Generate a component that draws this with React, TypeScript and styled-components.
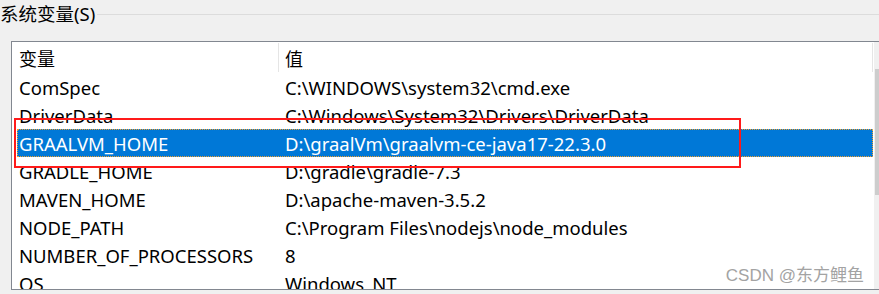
import styled, { createGlobalStyle } from 'styled-components';

const GlobalStyle = createGlobalStyle`
  html, body {
    margin: 0;
    padding: 0;
    background: #f0f0f0;
  }
  body {
    font-family: "Noto Sans", "Noto Sans CJK SC", sans-serif;
  }
`;

const Page = styled.div`
  position: relative;
  width: 879px;
  height: 294px;
  overflow: hidden;
  background: #f0f0f0;
`;

const GroupHeader = styled.div`
  display: flex;
  align-items: center;
  height: 28px;
  gap: 2px;
`;

const GroupTitle = styled.span`
  font-size: 18.5px;
  color: #000;
  white-space: nowrap;
  line-height: 28px;
`;

const GroupLine = styled.div`
  flex: 1;
  border-top: 1px solid #dcdcdc;
`;

const ListBox = styled.div`
  display: flex;
  margin: 13px 0 0 11px;
  width: 881px;
  height: 249px;
  box-sizing: border-box;
  border: 1px solid #828790;
  background: #fff;
`;

const Content = styled.div`
  flex: 1;
  display: flex;
  flex-direction: column;
  overflow: hidden;
`;

const HeaderRow = styled.div`
  display: flex;
  height: 31px;
  align-items: stretch;
  flex-shrink: 0;
`;

const HeaderCell = styled.div<{ $width?: number }>`
  display: flex;
  align-items: center;
  box-sizing: border-box;
  ${(p) => (p.$width ? `width: ${p.$width}px;` : 'flex: 1;')}
  padding-left: ${(p) => (p.$width ? 7 : 6)}px;
  font-size: 18px;
  color: #000;
  border-right: 1px solid #e5e5e5;
  margin: 1px 0 1px;
`;

const Row = styled.div<{ $selected?: boolean }>`
  display: flex;
  align-items: center;
  flex-shrink: 0;
  height: 28px;
  margin-left: 5px;
  box-sizing: border-box;
  font-size: 18.5px;
  white-space: nowrap;
  color: ${(p) => (p.$selected ? '#fff' : '#000')};
  background: ${(p) => (p.$selected ? '#0078d7' : 'transparent')};
  border: 1px dotted ${(p) => (p.$selected ? '#f0a030' : 'transparent')};
`;

const NameCell = styled.span`
  width: 261px;
  padding-left: 1px;
  box-sizing: border-box;
`;

const ValueCell = styled.span`
  padding-left: 6px;
`;

const ScrollBar = styled.div`
  width: 17px;
  display: flex;
  flex-direction: column;
  background: #f0f0f0;
  border-left: 1px solid #fff;
`;

const ScrollButton = styled.div`
  height: 27px;
  background: #f0f0f0;
`;

const ScrollThumb = styled.div`
  height: 126px;
  background: #cdcdcd;
  margin-left: 1px;
`;

const Highlight = styled.div`
  position: absolute;
  left: 14px;
  top: 118px;
  width: 727px;
  height: 50px;
  box-sizing: border-box;
  border: 2px solid #ff1a1a;
`;

const Watermark = styled.div`
  position: absolute;
  right: 15px;
  bottom: 8px;
  font-size: 17px;
  color: #a3a3a3;
  font-family: "Liberation Sans", "Noto Sans CJK SC", sans-serif;
  white-space: nowrap;
`;

const rows = [
  { name: 'ComSpec', value: 'C:\\WINDOWS\\system32\\cmd.exe' },
  { name: 'DriverData', value: 'C:\\Windows\\System32\\Drivers\\DriverData' },
  { name: 'GRAALVM_HOME', value: 'D:\\graalVm\\graalvm-ce-java17-22.3.0', selected: true },
  { name: 'GRADLE_HOME', value: 'D:\\gradle\\gradle-7.3' },
  { name: 'MAVEN_HOME', value: 'D:\\apache-maven-3.5.2' },
  { name: 'NODE_PATH', value: 'C:\\Program Files\\nodejs\\node_modules' },
  { name: 'NUMBER_OF_PROCESSORS', value: '8' },
  { name: 'OS', value: 'Windows_NT' },
];

export default function App() {
  return (
    <Page>
      <GlobalStyle />
      <GroupHeader>
        <GroupTitle>系统变量(S)</GroupTitle>
        <GroupLine />
      </GroupHeader>
      <ListBox>
        <Content>
          <HeaderRow>
            <HeaderCell $width={267}>变量</HeaderCell>
            <HeaderCell>值</HeaderCell>
          </HeaderRow>
          {rows.map((r) => (
            <Row key={r.name} $selected={r.selected}>
              <NameCell>{r.name}</NameCell>
              <ValueCell>{r.value}</ValueCell>
            </Row>
          ))}
        </Content>
        <ScrollBar>
          <ScrollButton />
          <ScrollThumb />
        </ScrollBar>
      </ListBox>
      <Highlight />
      <Watermark>CSDN @东方鲤鱼</Watermark>
    </Page>
  );
}
